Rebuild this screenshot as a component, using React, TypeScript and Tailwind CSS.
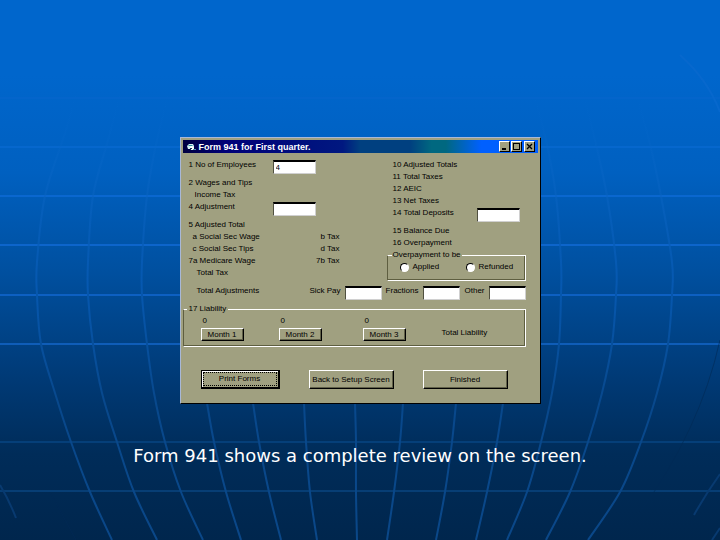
import { useState } from 'react';
import type { ReactNode } from 'react';

type Point = [number, number];

const meridians: Point[][] = [
  [[80, 80], [66, 130], [45, 196], [37, 262], [37, 295], [41, 344], [55, 393], [71, 442], [90, 492], [112, 540]],
  [[124, 80], [108, 140], [93, 196], [88, 262], [88, 295], [93, 344], [102, 393], [117, 442], [134, 492], [157, 540]],
  [[172, 80], [157, 140], [147, 196], [142, 262], [142, 295], [147, 344], [154, 393], [165, 442], [181, 492], [203, 540]],
  [[207, 403], [214, 442], [226, 492], [241, 540]],
  [[253, 403], [259, 442], [269, 492], [281, 540]],
  [[304, 403], [306, 442], [310, 492], [317, 540]],
  [[355, 403], [356, 442], [356, 492], [357, 540]],
  [[403, 403], [400, 442], [394, 492], [387, 540]],
  [[456, 403], [452, 442], [445, 492], [436, 540]],
  [[503, 403], [497, 442], [487, 492], [476, 540]],
  [[530, 80], [546, 140], [556, 196], [561, 262], [561, 295], [559, 344], [552, 393], [541, 442], [527, 492], [507, 540]],
  [[580, 80], [595, 140], [607, 196], [616, 262], [616, 295], [612, 344], [602, 393], [588, 442], [570, 492], [546, 540]],
  [[632, 80], [649, 140], [661, 196], [672, 262], [672, 295], [668, 344], [657, 393], [641, 442], [620, 492], [588, 540]],
];

const parallels = [
  { y: 98, color: '#0465cb' },
  { y: 147, color: '#0667cd' },
  { y: 196, color: '#0a67cf' },
  { y: 245, color: '#0d65cb' },
  { y: 295, color: '#0d60c2' },
  { y: 344, color: '#0f5db8' },
  { y: 442, color: '#053f79' },
  { y: 491, color: '#073e75' },
];

// Catmull-Rom through the given points, written as cubic beziers
const smooth = (points: Point[]) => {
  let d = `M${points[0][0]} ${points[0][1]}`;
  for (let i = 0; i < points.length - 1; i++) {
    const before = points[i - 1] ?? points[i];
    const from = points[i];
    const to = points[i + 1];
    const after = points[i + 2] ?? to;
    d += ` C${from[0] + (to[0] - before[0]) / 6} ${from[1] + (to[1] - before[1]) / 6}`;
    d += ` ${to[0] - (after[0] - from[0]) / 6} ${to[1] - (after[1] - from[1]) / 6} ${to[0]} ${to[1]}`;
  }
  return d;
};

const GlobeGrid = () => (
  <svg
    className="absolute inset-0 h-full w-full"
    viewBox="0 0 720 540"
    preserveAspectRatio="none"
    fill="none"
    aria-hidden="true"
  >
    <defs>
      <linearGradient id="meridian" gradientUnits="userSpaceOnUse" x1="0" y1="80" x2="0" y2="540">
        <stop offset="0" stopColor="#0066cc" stopOpacity="0" />
        <stop offset="0.2" stopColor="#0a66c6" stopOpacity="0.4" />
        <stop offset="0.45" stopColor="#0658b0" />
        <stop offset="0.7" stopColor="#08488c" />
        <stop offset="1" stopColor="#0a4788" />
      </linearGradient>
    </defs>
    {parallels.map((line) => (
      <path key={line.y} d={`M0 ${line.y}H720`} stroke={line.color} strokeWidth="2" />
    ))}
    {meridians.map((points, i) => (
      <path key={i} d={smooth(points)} stroke="url(#meridian)" strokeWidth="2" />
    ))}
    <path d="M0 485Q9 500 16 518M720 474Q705 495 694 515M720 528L712 540" stroke="#083a70" strokeWidth="2" />
    <path d="M680 55Q708 80 720 112" stroke="#0768cd" strokeWidth="2" />
    <path d="M50 492L76 540M720 340Q700 430 640 512" stroke="#002a55" strokeWidth="1" opacity="0.6" />
  </svg>
);

const Field = ({ label, wide, initial = '' }: { label: string; wide?: boolean; initial?: string }) => {
  const [value, setValue] = useState(initial);

  return (
    <input
      type="text"
      aria-label={label}
      value={value}
      onChange={(e) => setValue(e.target.value)}
      className={`${wide ? 'w-[43px]' : 'w-[37px]'} h-3.5 shrink-0 border border-t-2 border-t-black border-l-[#505040] border-r-[#d0d0d0] border-b-[#d0d0d0] bg-white px-0.5 leading-[11px] outline-none`}
    />
  );
};

const Row = ({ children }: { children: ReactNode }) => (
  <div className="flex h-3 items-start">{children}</div>
);

const frame =
  'min-w-0 border border-white border-l-[#5e5e40] shadow-[inset_-1px_-1px_0_#5e5e40]';

const button =
  'flex items-center justify-center border border-t-white border-l-white border-r-black border-b-black shadow-[inset_-1px_-1px_0_#606048]';

const captionButton =
  'flex h-[11px] w-[11px] items-center justify-center border border-t-white border-l-white border-r-black border-b-black bg-[#a0a080]';

const TitleBar = () => (
  <header className="flex h-[13px] items-center bg-[linear-gradient(90deg,#000040_0%,#000078_12%,#001880_45%,#004080_50%,#004080_64%,#006880_70%,#006880_74%,#0060ff_84%)] pr-[3px] pl-1 text-white">
    <svg className="h-[9px] w-[9px]" viewBox="0 0 9 9" aria-hidden="true">
      <path d="M0 4L2 2H6L7 4V7H1Z" fill="#d8f4f4" />
      <path d="M1 3H5L6 4H2Z" fill="#3090a0" />
      <path d="M3 5L5 4L7 6V8H4Z" fill="#fff" />
      <path d="M3 6H5V7H3Z" fill="#103050" />
      <path d="M6 7H9V8H6Z" fill="#50a0b0" />
    </svg>
    <h1 className="ml-[3px] flex-1 text-[9px] leading-3 font-bold">
      Form 941 for First quarter.
    </h1>
    <button type="button" aria-label="Minimize" className={captionButton}>
      <svg className="h-[9px] w-[9px]" viewBox="0 0 9 9" shapeRendering="crispEdges">
        <path d="M2 6h4v2H2z" fill="#000" />
      </svg>
    </button>
    <button type="button" aria-label="Maximize" className={`ml-px ${captionButton}`}>
      <svg className="h-[9px] w-[9px]" viewBox="0 0 9 9" shapeRendering="crispEdges">
        <path d="M1 1h7v7H1zM2 2v5h5V2z" fill="#000" fillRule="evenodd" />
      </svg>
    </button>
    <button type="button" aria-label="Close" className={`ml-0.5 ${captionButton}`}>
      <svg className="h-[9px] w-[9px]" viewBox="0 0 9 9">
        <path d="M2 2L7 7M7 2L2 7" stroke="#000" strokeWidth="1.3" />
      </svg>
    </button>
  </header>
);

const ReviewForm = () => (
  <form className="pt-[7px] pr-3 pb-3" onSubmit={(e) => e.preventDefault()}>
    <div className="flex justify-between">
      <div className="ml-1.5 w-[151px]">
        <Row>
          <span className="w-[84px]">1 No of Employees</span>
          <Field label="No of Employees" wide initial="4" />
        </Row>
        <div className="mt-1.5">
          <Row>2 Wages and Tips</Row>
          <Row>
            <span className="pl-1.5">Income Tax</span>
          </Row>
          <Row>
            <span className="w-[84px]">4 Adjustment</span>
            <Field label="Adjustment" wide />
          </Row>
        </div>
        <div className="mt-1.5">
          <Row>5 Adjusted Total</Row>
          <Row>
            <span className="flex-1 pl-1">a Social Sec Wage</span>
            <span>b Tax</span>
          </Row>
          <Row>
            <span className="flex-1 pl-1">c Social Sec Tips</span>
            <span>d Tax</span>
          </Row>
          <Row>
            <span className="flex-1">7a Medicare Wage</span>
            <span>7b Tax</span>
          </Row>
          <Row>
            <span className="pl-2">Total Tax</span>
          </Row>
        </div>
      </div>

      <div className="w-[139px]">
        <div className="pl-1.5">
          <Row>10 Adjusted Totals</Row>
          <Row>11 Total Taxes</Row>
          <Row>12 AEIC</Row>
          <Row>13 Net Taxes</Row>
          <Row>
            <span className="w-[84px]">14 Total Deposits</span>
            <Field label="Total Deposits" wide />
          </Row>
          <div className="mt-1.5">
            <Row>15 Balance Due</Row>
            <Row>16 Overpayment</Row>
          </div>
        </div>
        <fieldset className={`flex h-[31px] items-start ${frame} pl-3`}>
          <legend className="-ml-2 px-px">Overpayment to be</legend>
          <label className="flex w-[66px] items-center gap-1 pt-0.5">
            <input
              type="radio"
              name="overpayment"
              className="h-[9px] w-[9px] appearance-none rounded-full border border-t-black border-l-black border-r-white border-b-white bg-white checked:bg-black"
            />
            Applied
          </label>
          <label className="flex items-center gap-1 pt-0.5">
            <input
              type="radio"
              name="overpayment"
              className="h-[9px] w-[9px] appearance-none rounded-full border border-t-black border-l-black border-r-white border-b-white bg-white checked:bg-black"
            />
            Refunded
          </label>
        </fieldset>
      </div>
    </div>

    <div className="mt-[5px] flex h-[18px] items-start">
      <span className="flex-1 pl-3.5">Total Adjustments</span>
      <div className="flex w-[78px] justify-end gap-1">
        <span>Sick Pay</span>
        <Field label="Sick Pay" />
      </div>
      <div className="flex w-[78px] justify-end gap-1">
        <span>Fractions</span>
        <Field label="Fractions" />
      </div>
      <div className="flex w-[66px] justify-end gap-1">
        <span>Other</span>
        <Field label="Other" />
      </div>
    </div>

    <fieldset className={`h-[43px] ${frame} pl-[17px]`}>
      <legend className="-ml-3.5 px-0.5">17 Liability</legend>
      <div className="grid grid-cols-[78px_84px_79px_1fr] gap-y-0.5 pt-0.5">
        <span className="pl-0.5">0</span>
        <span className="pl-0.5">0</span>
        <span className="col-span-2 pl-0.5">0</span>
        <button type="button" className={`h-[13px] w-[43px] ${button}`}>Month 1</button>
        <button type="button" className={`h-[13px] w-[43px] ${button}`}>Month 2</button>
        <button type="button" className={`h-[13px] w-[43px] ${button}`}>Month 3</button>
        <span>Total Liability</span>
      </div>
    </fieldset>

    <div className="mt-[23px] flex gap-[29px] pl-[18px]">
      <button type="submit" className="h-[19px] w-[79px] border border-r-2 border-b-2 border-black p-px shadow-[inset_1px_1px_0_#ffffff]">
        <span className="flex h-full items-center justify-center border border-dotted border-black">Print Forms</span>
      </button>
      <button type="button" className={`h-[19px] w-[85px] ${button}`}>Back to Setup Screen</button>
      <button type="button" className={`h-[19px] w-[85px] ${button}`}>Finished</button>
    </div>
  </form>
);

const App = () => {
  return (
    <main className="relative flex min-h-screen flex-col items-center bg-[linear-gradient(180deg,#0066cc_0%,#0066cc_14%,#0060c0_32%,#0050a0_50%,#003a76_70%,#002c59_84%,#00264d_100%)] pt-[137px]">
      <GlobeGrid />
      <section className="relative w-full max-w-[361px] border border-t-[#a8b8d8] border-l-[#a8b8d8] border-r-black border-b-black bg-[#a0a080] p-0.5 font-['Liberation_Sans',sans-serif] text-[8px] leading-[10px] whitespace-nowrap text-black">
        <TitleBar />
        <ReviewForm />
      </section>
      <p className="relative mt-10 px-4 text-center font-['DejaVu_Sans',sans-serif] text-[18px] leading-6 text-white">
        Form 941 shows a complete review on the screen.
      </p>
    </main>
  );
};

export default App;
